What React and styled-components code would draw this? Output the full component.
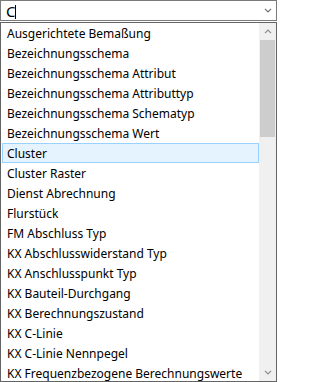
import React from "react";
import styled, { createGlobalStyle } from "styled-components";

const Global = createGlobalStyle`
  html, body { margin: 0; padding: 0; background: #fff; }
  body { font-family: "Noto Sans", "Open Sans", sans-serif; font-size: 12px; color: #000; }
  * { box-sizing: border-box; }
`;

const Frame = styled.div`
  width: 277px;
  height: 382px;
  display: flex;
  flex-direction: column;
  background: #fff;
`;

const Combo = styled.div`
  height: 21px;
  border: 1px solid #7a7a7a;
  display: flex;
  align-items: center;
  padding-left: 5px;
  flex: none;
`;

const InputText = styled.div`
  flex: 1;
  display: flex;
  align-items: center;
  height: 100%;
  font-size: 15px;
  line-height: 19px;
  padding-top: 1px;
`;

const Caret = styled.span`
  display: inline-block;
  width: 1px;
  height: 14px;
  background: #000;
  margin-left: 0px;
  margin-top: 1px;
`;

const ComboButton = styled.div`
  width: 17px;
  height: 100%;
  display: flex;
  align-items: center;
  justify-content: center;
`;

const Gap = styled.div`
  height: 1px;
  flex: none;
`;

const Dropdown = styled.div`
  flex: 1;
  border: 1px solid #646464;
  display: flex;
  overflow: hidden;
  min-height: 0;
`;

const List = styled.div`
  flex: 1;
  display: flex;
  flex-direction: column;
  padding-left: 1px;
  overflow: hidden;
`;

const Item = styled.div`
  flex: none;
  height: 20px;
  line-height: 16px;
  padding-top: 2px;
  padding-left: 4px;
  white-space: nowrap;
  border: 1px solid ${(p) => (p.$active ? "#99d1ff" : "transparent")};
  background: ${(p) => (p.$active ? "#e5f3ff" : "transparent")};
`;

const Scrollbar = styled.div`
  width: 17px;
  flex: none;
  background: #f0f0f0;
  display: flex;
  flex-direction: column;
`;

const ArrowBtn = styled.div`
  height: 17px;
  flex: none;
  display: flex;
  align-items: center;
  justify-content: center;
`;

const Track = styled.div`
  flex: 1;
  display: flex;
  flex-direction: column;
`;

const Thumb = styled.div`
  height: 97px;
  margin: 0 1px;
  background: #cdcdcd;
`;

const Chevron = ({ up, color = "#8a8a8a" }) => (
  <svg width="8" height="5" viewBox="0 0 8 5">
    <path
      d={up ? "M1 4.2 L4 1.2 L7 4.2" : "M1 0.8 L4 3.8 L7 0.8"}
      fill="none"
      stroke={color}
      strokeWidth="1.2"
    />
  </svg>
);

const items = [
  "Ausgerichtete Bemaßung",
  "Bezeichnungsschema",
  "Bezeichnungsschema Attribut",
  "Bezeichnungsschema Attributtyp",
  "Bezeichnungsschema Schematyp",
  "Bezeichnungsschema Wert",
  "Cluster",
  "Cluster Raster",
  "Dienst Abrechnung",
  "Flurstück",
  "FM Abschluss Typ",
  "KX Abschlusswiderstand Typ",
  "KX Anschlusspunkt Typ",
  "KX Bauteil-Durchgang",
  "KX Berechnungszustand",
  "KX C-Linie",
  "KX C-Linie Nennpegel",
  "KX Frequenzbezogene Berechnungswerte",
];

export default function App() {
  return (
    <>
      <Global />
      <Frame>
        <Combo>
          <InputText>
            C<Caret />
          </InputText>
          <ComboButton>
            <Chevron color="#707070" />
          </ComboButton>
        </Combo>
        <Gap />
        <Dropdown>
          <List>
            {items.map((t) => (
              <Item key={t} $active={t === "Cluster"}>
                {t}
              </Item>
            ))}
          </List>
          <Scrollbar>
            <ArrowBtn>
              <Chevron up />
            </ArrowBtn>
            <Track>
              <Thumb />
            </Track>
            <ArrowBtn>
              <Chevron />
            </ArrowBtn>
          </Scrollbar>
        </Dropdown>
      </Frame>
    </>
  );
}
